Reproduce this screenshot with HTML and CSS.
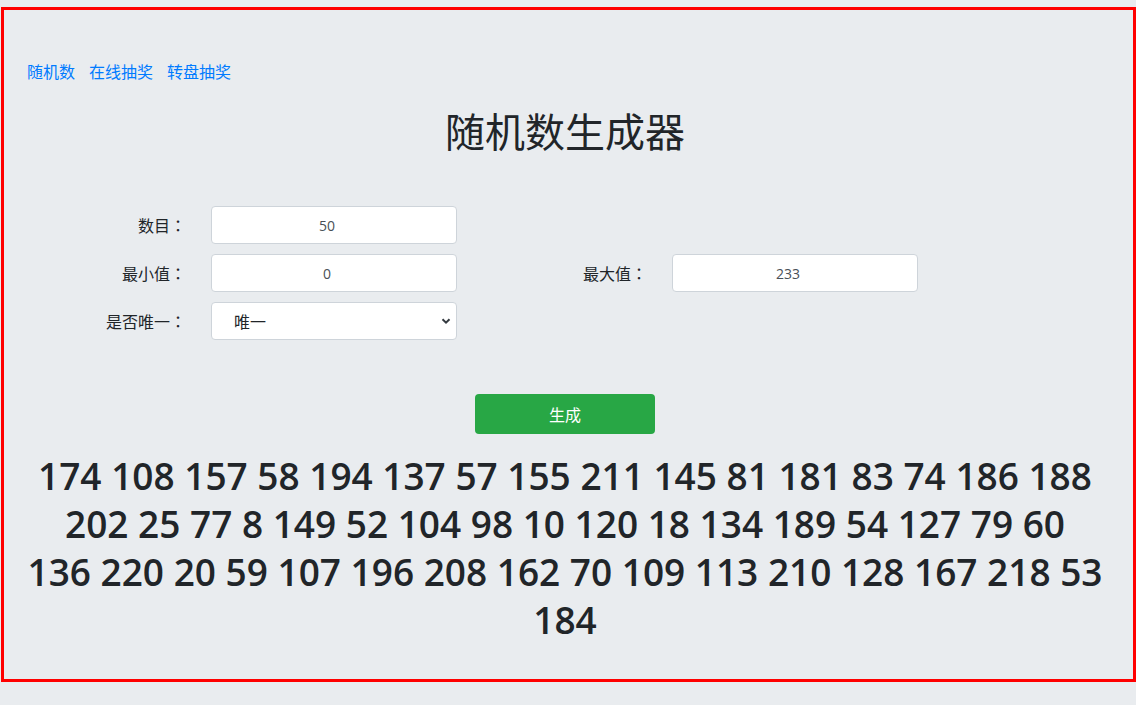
FILE: index.html
```html
<!DOCTYPE html>
<html>

	<head>
		<meta charset="UTF-8">
		<title>随机数生成器</title>
		<link rel="stylesheet" href="styles.css">
	</head>

	<body>
		<div class="frame">
			<div class="wrap">
				<!-- 顶部导航 -->
				<div class="nav">
					<a href="#">随机数</a>
					<a href="#">在线抽奖</a>
					<a href="#">转盘抽奖</a>
				</div>
				<h1 class="title">随机数生成器</h1>
				<!-- 参数表单 -->
				<div class="form">
					<label class="label">数目<span class="colon">：</span></label>
					<input class="input" type="text" value="50">
					<span></span>
					<span></span>

					<label class="label">最小值<span class="colon">：</span></label>
					<input class="input" type="text" value="0">
					<label class="label">最大值<span class="colon">：</span></label>
					<input class="input" type="text" value="233">

					<label class="label">是否唯一<span class="colon">：</span></label>
					<div class="select-box">
						<select class="select">
							<option>唯一</option>
							<option>不唯一</option>
						</select>
						<svg class="chevron" width="10" height="8" viewBox="0 0 10 8">
							<path d="M1.5 2.2 L5 5.7 L8.5 2.2" fill="none" stroke="#343a40" stroke-width="2"/>
						</svg>
					</div>
				</div>
				<div class="btn-row">
					<a href="javascript:;" class="btn">生成</a>
				</div>
				<!-- 结果 -->
				<h1 class="result">174 108 157 58 194 137 57 155 211 145 81 181 83 74 186 188<br>202 25 77 8 149 52 104 98 10 120 18 134 189 54 127 79 60<br>136 220 20 59 107 196 208 162 70 109 113 210 128 167 218 53<br>184</h1>
			</div>
		</div>
	</body>

</html>
```
FILE: styles.css
```css
* {
	margin: 0;
	padding: 0;
	box-sizing: border-box;
}

body {
	font-family: "Open Sans", "Noto Sans CJK SC", sans-serif;
	font-size: 16px;
	color: #212529;
	background: #e9ecef;
	padding: 7px 0 0 1px;
}

a {
	color: #007bff;
	text-decoration: none;
	cursor: pointer;
}

.frame {
	border: 3px solid #ff0000;
}

.wrap {
	padding: 50px 30px 35px 23px;
}

.nav {
	display: flex;
	gap: 14px;
	line-height: 24px;
	font-size: 16px;
}

.title {
	margin-top: 22px;
	text-align: center;
	font-family: "Noto Sans CJK SC", sans-serif;
	font-size: 40px;
	font-weight: 400;
	line-height: 48px;
}

.form {
	margin-top: 52px;
	display: grid;
	grid-template-columns: 159px 246px 165px 246px;
	column-gap: 25px;
	row-gap: 10px;
	align-items: center;
}

.label {
	text-align: right;
	font-family: "Noto Sans CJK SC", sans-serif;
	font-size: 16px;
	color: #212529;
}

.colon {
	font-family: "Noto Sans CJK TC", sans-serif;
}

.input,
.select {
	width: 246px;
	height: 38px;
	border: 1px solid #ced4da;
	border-radius: 4px;
	background: #fff;
	color: #495057;
	font-family: "Open Sans", "Noto Sans CJK SC", sans-serif;
	font-size: 14px;
	outline: none;
}

.input {
	text-align: center;
	padding-right: 14px;
}

.select-box {
	position: relative;
	width: 246px;
	height: 38px;
}

.select {
	appearance: none;
	-webkit-appearance: none;
	padding-left: 22px;
	font-family: "Noto Sans CJK SC", sans-serif;
	font-size: 16px;
	color: #212529;
}

.chevron {
	position: absolute;
	right: 6px;
	top: 15px;
	pointer-events: none;
}

.btn-row {
	margin-top: 54px;
	display: flex;
	justify-content: center;
}

.btn {
	width: 180px;
	height: 40px;
	line-height: 40px;
	text-align: center;
	background: #28a745;
	color: #fff;
	border-radius: 4px;
	font-family: "Noto Sans CJK SC", sans-serif;
	font-size: 16px;
}

.result {
	margin-top: 18px;
	text-align: center;
	font-size: 37px;
	font-weight: 600;
	line-height: 48px;
	color: #212529;
}
```
